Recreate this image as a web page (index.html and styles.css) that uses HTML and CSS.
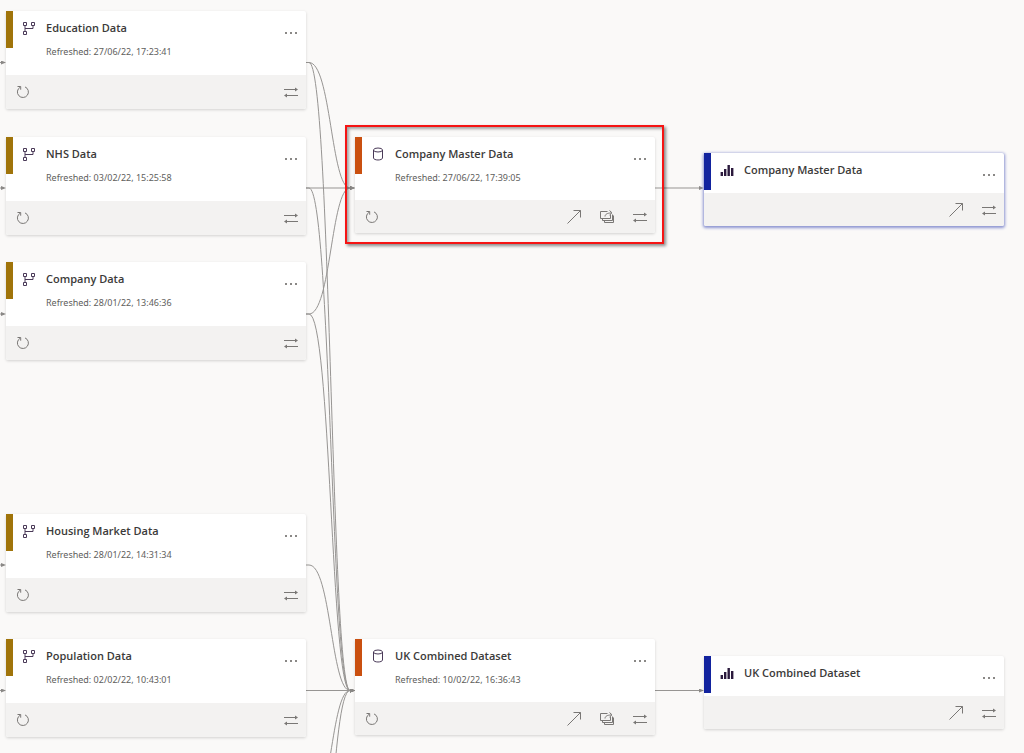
FILE: index.html
```html
<!DOCTYPE html>
<html lang="en">
    <head>
        <meta charset="UTF-8">
        <title>Lineage view</title>
        <link rel="stylesheet" href="styles.css">
    </head>
    <body>
        <svg class="icon-defs" aria-hidden="true">
            <symbol id="icon-dataflow" viewBox="0 0 14 14">
                <path d="M1.500 1.500h3v3h-3zM9.500 1.500h3v3h-3zM1.500 10.500h3v3h-3zM3 4.500v6M3 7.500h8v-3"/>
            </symbol>
            <symbol id="icon-dataset" viewBox="0 0 14 14">
                <ellipse cx="7" cy="3" rx="4.500" ry="2"/>
                <path d="M2.500 3v8c0 1.100 2 2 4.500 2s4.500-.9 4.500-2V3"/>
            </symbol>
            <symbol id="icon-report" viewBox="0 0 14 14">
                <path class="fill" d="M.6 9H3v4H.6zM4 6h2.400v7H4zM7.500 2h2.400v11H7.500zM11 5h2.400v8H11z"/>
            </symbol>
            <symbol id="icon-refresh" viewBox="0 0 14 14">
                <path d="M9 1.900a5.500 5.500 0 1 1-4.800.3M1.500 1.500h3.200v3.200"/>
            </symbol>
            <symbol id="icon-swap" viewBox="0 0 14 14">
                <path d="M0 4.500h13M1 10.500h13"/>
                <path class="fill" d="M11 2.500l3 2-3 2zM3 8.500l-3 2 3 2z"/>
            </symbol>
            <symbol id="icon-open" viewBox="0 0 14 14">
                <path d="M.5 13.500l13-13M6.500 .5h7v7"/>
            </symbol>
            <symbol id="icon-impact" viewBox="0 0 14 14">
                <path d="M7.500 1.500h-7v7h10v-4M2.500 8.500v2h10v-6M4.500 10.500v2h9v-7M5 6.500c0-2 2-3.500 6-3.500M9.500 .5l2.500 2.300-2.500 2.300"/>
            </symbol>
        </svg>

        <main class="canvas">
            <svg class="links" aria-hidden="true">
                <defs>
                    <marker id="arrow" viewBox="0 0 5 4" markerWidth="5" markerHeight="4" refX="3" refY="2" markerUnits="userSpaceOnUse">
                        <path class="arrow-head" d="M0 0l5 2-5 2z"/>
                    </marker>
                </defs>
                <!-- into the dataflows -->
                <path d="M-10 62.500H4"/>
                <path d="M-10 188H4"/>
                <path d="M-10 314H4"/>
                <path d="M-10 565H4"/>
                <path d="M-10 690.500H4"/>
                <!-- dataflows to Company Master Data -->
                <path d="M306 62.500H309C331 62.500 331 188 350 188H353"/>
                <path d="M306 188H353"/>
                <path d="M306 314H309C331 314 331 188 350 188H353"/>
                <!-- dataflows to UK Combined Dataset -->
                <path d="M306 62.500H309C331 62.500 331 690.500 350 690.500H353"/>
                <path d="M306 188H309C331 188 331 690.500 350 690.500H353"/>
                <path d="M306 314H309C331 314 331 690.500 350 690.500H353"/>
                <path d="M306 565H309C331 565 331 690.500 350 690.500H353"/>
                <path d="M306 690.500H353"/>
                <path d="M306 816H309C331 816 331 690.500 350 690.500H353"/>
                <path d="M306 942H309C331 942 331 690.500 350 690.500H353"/>
                <!-- datasets to reports -->
                <path d="M655 188H702"/>
                <path d="M655 690.500H702"/>
            </svg>

            <article class="card dataflow education">
                <div class="card-head">
                    <svg class="icon type-icon"><use href="#icon-dataflow"/></svg>
                    <div class="card-text">
                        <h2>Education Data</h2>
                        <p>Refreshed: 27/06/22, 17:23:41</p>
                    </div>
                    <button class="more" aria-label="More options"></button>
                </div>
                <div class="card-foot">
                    <button class="refresh" aria-label="Refresh now"><svg class="icon"><use href="#icon-refresh"/></svg></button>
                    <button aria-label="Show lineage"><svg class="icon"><use href="#icon-swap"/></svg></button>
                </div>
            </article>

            <article class="card dataflow nhs">
                <div class="card-head">
                    <svg class="icon type-icon"><use href="#icon-dataflow"/></svg>
                    <div class="card-text">
                        <h2>NHS Data</h2>
                        <p>Refreshed: 03/02/22, 15:25:58</p>
                    </div>
                    <button class="more" aria-label="More options"></button>
                </div>
                <div class="card-foot">
                    <button class="refresh" aria-label="Refresh now"><svg class="icon"><use href="#icon-refresh"/></svg></button>
                    <button aria-label="Show lineage"><svg class="icon"><use href="#icon-swap"/></svg></button>
                </div>
            </article>

            <article class="card dataflow company">
                <div class="card-head">
                    <svg class="icon type-icon"><use href="#icon-dataflow"/></svg>
                    <div class="card-text">
                        <h2>Company Data</h2>
                        <p>Refreshed: 28/01/22, 13:46:36</p>
                    </div>
                    <button class="more" aria-label="More options"></button>
                </div>
                <div class="card-foot">
                    <button class="refresh" aria-label="Refresh now"><svg class="icon"><use href="#icon-refresh"/></svg></button>
                    <button aria-label="Show lineage"><svg class="icon"><use href="#icon-swap"/></svg></button>
                </div>
            </article>

            <article class="card dataflow housing">
                <div class="card-head">
                    <svg class="icon type-icon"><use href="#icon-dataflow"/></svg>
                    <div class="card-text">
                        <h2>Housing Market Data</h2>
                        <p>Refreshed: 28/01/22, 14:31:34</p>
                    </div>
                    <button class="more" aria-label="More options"></button>
                </div>
                <div class="card-foot">
                    <button class="refresh" aria-label="Refresh now"><svg class="icon"><use href="#icon-refresh"/></svg></button>
                    <button aria-label="Show lineage"><svg class="icon"><use href="#icon-swap"/></svg></button>
                </div>
            </article>

            <article class="card dataflow population">
                <div class="card-head">
                    <svg class="icon type-icon"><use href="#icon-dataflow"/></svg>
                    <div class="card-text">
                        <h2>Population Data</h2>
                        <p>Refreshed: 02/02/22, 10:43:01</p>
                    </div>
                    <button class="more" aria-label="More options"></button>
                </div>
                <div class="card-foot">
                    <button class="refresh" aria-label="Refresh now"><svg class="icon"><use href="#icon-refresh"/></svg></button>
                    <button aria-label="Show lineage"><svg class="icon"><use href="#icon-swap"/></svg></button>
                </div>
            </article>

            <article class="card dataset master-dataset">
                <div class="card-head">
                    <svg class="icon type-icon"><use href="#icon-dataset"/></svg>
                    <div class="card-text">
                        <h2>Company Master Data</h2>
                        <p>Refreshed: 27/06/22, 17:39:05</p>
                    </div>
                    <button class="more" aria-label="More options"></button>
                </div>
                <div class="card-foot">
                    <button class="refresh" aria-label="Refresh now"><svg class="icon"><use href="#icon-refresh"/></svg></button>
                    <button aria-label="Open details"><svg class="icon"><use href="#icon-open"/></svg></button>
                    <button aria-label="Impact analysis"><svg class="icon"><use href="#icon-impact"/></svg></button>
                    <button aria-label="Show lineage"><svg class="icon"><use href="#icon-swap"/></svg></button>
                </div>
            </article>

            <article class="card dataset uk-dataset">
                <div class="card-head">
                    <svg class="icon type-icon"><use href="#icon-dataset"/></svg>
                    <div class="card-text">
                        <h2>UK Combined Dataset</h2>
                        <p>Refreshed: 10/02/22, 16:36:43</p>
                    </div>
                    <button class="more" aria-label="More options"></button>
                </div>
                <div class="card-foot">
                    <button class="refresh" aria-label="Refresh now"><svg class="icon"><use href="#icon-refresh"/></svg></button>
                    <button aria-label="Open details"><svg class="icon"><use href="#icon-open"/></svg></button>
                    <button aria-label="Impact analysis"><svg class="icon"><use href="#icon-impact"/></svg></button>
                    <button aria-label="Show lineage"><svg class="icon"><use href="#icon-swap"/></svg></button>
                </div>
            </article>

            <article class="card report selected master-report">
                <div class="card-head">
                    <svg class="icon type-icon"><use href="#icon-report"/></svg>
                    <div class="card-text">
                        <h2>Company Master Data</h2>
                    </div>
                    <button class="more" aria-label="More options"></button>
                </div>
                <div class="card-foot">
                    <button aria-label="Open report"><svg class="icon"><use href="#icon-open"/></svg></button>
                    <button aria-label="Show lineage"><svg class="icon"><use href="#icon-swap"/></svg></button>
                </div>
            </article>

            <article class="card report uk-report">
                <div class="card-head">
                    <svg class="icon type-icon"><use href="#icon-report"/></svg>
                    <div class="card-text">
                        <h2>UK Combined Dataset</h2>
                    </div>
                    <button class="more" aria-label="More options"></button>
                </div>
                <div class="card-foot">
                    <button aria-label="Open report"><svg class="icon"><use href="#icon-open"/></svg></button>
                    <button aria-label="Show lineage"><svg class="icon"><use href="#icon-swap"/></svg></button>
                </div>
            </article>

            <div class="highlight"></div>
        </main>
    </body>
</html>
```
FILE: styles.css
```css
body {
    margin: 0;
    background-color: #faf9f8;
    font-family: "Open Sans", "Noto Sans", sans-serif;
    color: #3b3a39;
}

.icon-defs {
    position: absolute;
    width: 0;
    height: 0;
}

.canvas {
    position: relative;
    height: 100vh;
    overflow: hidden;
}

.links {
    position: absolute;
    width: 100%;
    height: 100%;
}

.links > path {
    fill: none;
    stroke: #979593;
    stroke-width: 1;
    marker-end: url(#arrow);
}

.arrow-head {
    fill: #8a8886;
}

/* cards */
.card {
    position: absolute;
    width: 300px;
    background-color: white;
    border-radius: 2px;
    box-shadow: 0 1px 3px rgba(0, 0, 0, 0.16);
}

.card::before {
    content: "";
    position: absolute;
    top: 0;
    left: 0;
    width: 7px;
    height: 37px;
}

.dataflow::before { background-color: #a0740a; }
.dataset::before  { background-color: #ca5010; }
.report::before   { background-color: #12239e; }

.selected {
    box-shadow: 0 1px 3px 1px #8b93d1;
}

/* columns */
.dataflow { left: 6px; }
.dataset  { left: 355px; }
.report   { left: 704px; }

/* rows */
.education      { top: 11px; }
.nhs            { top: 137px; }
.company        { top: 262px; }
.housing        { top: 514px; }
.population     { top: 639px; }
.master-dataset { top: 137px; }
.uk-dataset     { top: 639px; }
.master-report  { top: 153px; }
.uk-report      { top: 656px; }

.card-head {
    display: flex;
    align-items: flex-start;
    box-sizing: border-box;
    min-height: 64px;
    padding: 9px 8px 0 16px;
}

.dataset .card-head { min-height: 63px; }
.report .card-head  { min-height: 40px; }

.icon {
    display: block;
    width: 14px;
    height: 14px;
    fill: none;
    stroke: #797775;
}

.icon-defs .fill {
    fill: currentColor;
    stroke: none;
}

.type-icon {
    flex: none;
    margin: 1px 10px 0 0;
    color: #2b1a3d;
    stroke: #4a3a58;
}

.card-text {
    flex: 1;
}

h2 {
    margin: 0;
    font-size: 11px;
    line-height: 16px;
    font-weight: 600;
}

p {
    margin: 8px 0 0;
    font-family: "Noto Sans", "Open Sans", sans-serif;
    font-size: 9px;
    line-height: 16px;
    color: #605e5c;
}

button {
    border: 0;
    padding: 0;
    background: none;
    color: #797775;
}

.more {
    display: flex;
    justify-content: center;
    align-items: center;
    width: 14px;
    height: 26px;
}

.more::before {
    content: "";
    width: 2px;
    height: 2px;
    background-color: #8a8886;
    box-shadow: -5px 0 #8a8886, 5px 0 #8a8886;
}

.card-foot {
    display: flex;
    justify-content: flex-end;
    align-items: center;
    gap: 19px;
    height: 33px;
    padding: 0 8px 0 10px;
    background-color: #f3f2f1;
    border-radius: 0 0 2px 2px;
}

.dataflow .card-foot { height: 34px; }

.refresh {
    margin-right: auto;
}

/* red frame round the dataset */
.highlight {
    position: absolute;
    top: 125px;
    left: 345px;
    width: 315px;
    height: 115px;
    border: 2px solid #f51414;
    box-shadow: 2px 2px 3px rgba(0, 0, 0, 0.45), inset 2px 2px 3px rgba(0, 0, 0, 0.35);
    pointer-events: none;
}
```
